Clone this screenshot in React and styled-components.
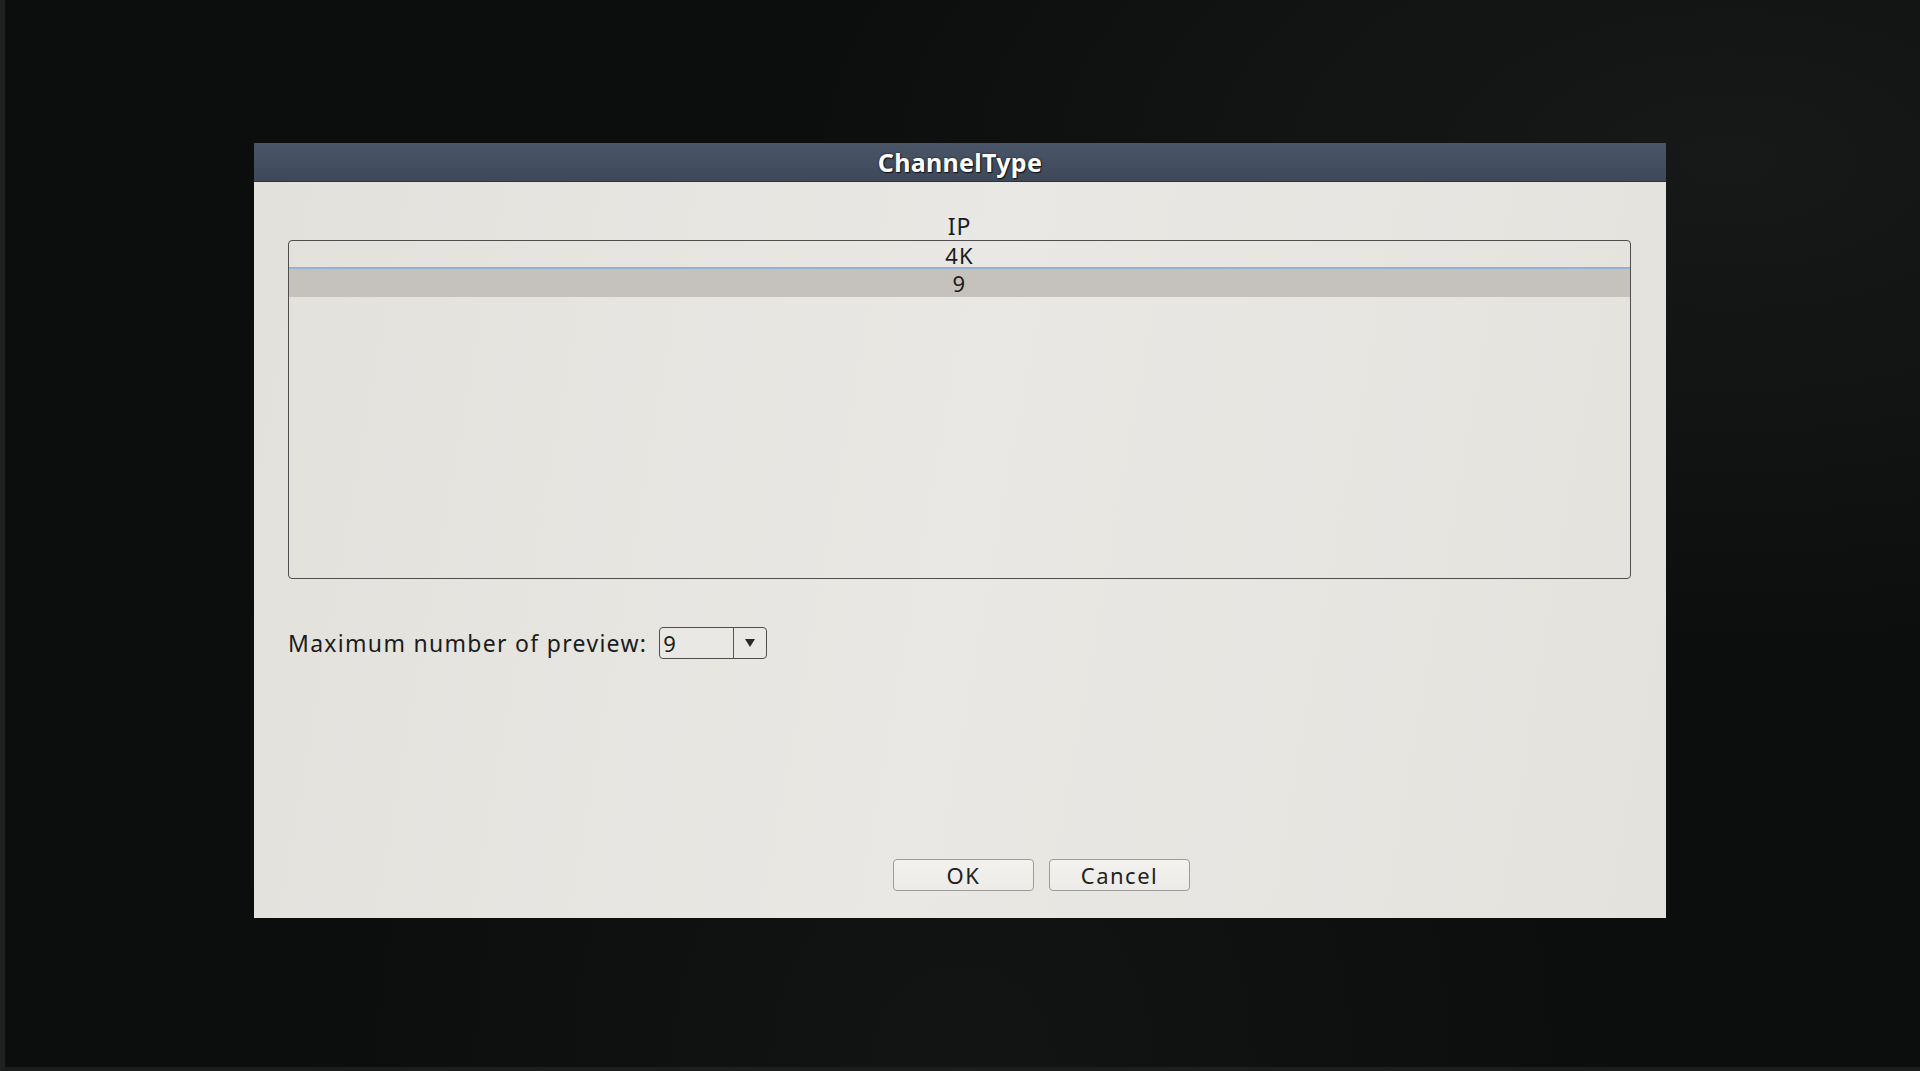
import React from 'react';
import styled, { createGlobalStyle } from 'styled-components';

const GlobalStyle = createGlobalStyle`
  html, body {
    margin: 0;
    padding: 0;
    background: #0c0e0d;
  }
  body {
    font-family: "Noto Sans", "DejaVu Sans", sans-serif;
  }
`;

const Screen = styled.div`
  width: 1920px;
  height: 1071px;
  box-sizing: border-box;
  padding: 143px 0 0 249px;
  border-left: 5px solid #1f2120;
  border-bottom: 4px solid #1c1e1d;
  background:
    radial-gradient(ellipse at 90% 15%, #161917 0%, rgba(14, 16, 15, 0) 40%),
    radial-gradient(ellipse at 50% 100%, #121413 0%, rgba(14, 16, 15, 0) 50%),
    #0c0e0d;
  overflow: hidden;
`;

const Dialog = styled.div`
  width: 1412px;
  height: 775px;
  display: flex;
  flex-direction: column;
  background: linear-gradient(100deg, #e2e1dc 0%, #e9e8e4 50%, #e3e2dd 100%);
`;

const TitleBar = styled.div`
  height: 38px;
  display: flex;
  align-items: center;
  justify-content: center;
  background: linear-gradient(180deg, #4a5668 0%, #3d4859 100%);
  color: #ffffff;
  font-size: 25px;
  font-weight: 700;
  letter-spacing: 0.3px;
  text-shadow: 0 0 2px #101418, 1px 1px 1px #101418;
  border-bottom: 1px solid #2b3340;
`;

const Body = styled.div`
  flex: 1;
  display: flex;
  flex-direction: column;
  padding: 30px 35px 27px 34px;
  color: #1c1c1c;
`;

const ColumnHeader = styled.div`
  height: 28px;
  line-height: 28px;
  text-align: center;
  font-size: 23px;
  letter-spacing: 1px;
`;

const ListBox = styled.div`
  height: 339px;
  box-sizing: border-box;
  border: 1.5px solid #4e4e4e;
  border-radius: 4px;
  display: flex;
  flex-direction: column;
  overflow: hidden;
`;

const Row = styled.div`
  height: ${p => (p.$selected ? '28px' : '26px')};
  line-height: ${p => (p.$selected ? '28px' : '28px')};
  text-align: center;
  font-size: 22px;
  letter-spacing: 1.2px;
  background: ${p => (p.$selected ? '#c5c2be' : 'transparent')};
  border-bottom: ${p => (p.$head ? '2px solid #93b1d2' : 'none')};
`;

const SettingRow = styled.div`
  display: flex;
  align-items: center;
  margin-top: 48px;
  gap: 12px;
`;

const Label = styled.span`
  font-size: 23px;
  letter-spacing: 1.3px;
`;

const Select = styled.div`
  width: 108px;
  height: 32px;
  box-sizing: border-box;
  border: 1.5px solid #4e4e4e;
  border-radius: 4px;
  display: flex;
  background: #e9e8e4;
`;

const SelectValue = styled.span`
  flex: 1;
  font-size: 22px;
  line-height: 30px;
  padding-left: 3px;
`;

const SelectArrow = styled.span`
  width: 32px;
  border-left: 1.5px solid #555;
  display: flex;
  align-items: center;
  justify-content: center;
`;

const Actions = styled.div`
  margin-top: auto;
  display: flex;
  gap: 15px;
  padding-left: 605px;
`;

const Button = styled.button`
  width: 141px;
  height: 32px;
  box-sizing: border-box;
  border: 1px solid #9c9c9a;
  border-radius: 4px;
  background: linear-gradient(180deg, #f3f2ef 0%, #ecebe7 100%);
  color: #222;
  font-family: "Noto Sans", "DejaVu Sans", sans-serif;
  font-size: 22px;
  letter-spacing: 1.5px;
  padding: 0;
  line-height: 30px;
`;

export default function App() {
  return (
    <>
      <GlobalStyle />
      <Screen>
        <Dialog>
          <TitleBar>ChannelType</TitleBar>
          <Body>
            <ColumnHeader>IP</ColumnHeader>
            <ListBox>
              <Row $head>4K</Row>
              <Row $selected>9</Row>
            </ListBox>
            <SettingRow>
              <Label>Maximum number of preview:</Label>
              <Select>
                <SelectValue>9</SelectValue>
                <SelectArrow>
                  <svg width="10" height="8" viewBox="0 0 10 8">
                    <path d="M0 0 H10 L5 8 Z" fill="#2a2a2a" />
                  </svg>
                </SelectArrow>
              </Select>
            </SettingRow>
            <Actions>
              <Button>OK</Button>
              <Button>Cancel</Button>
            </Actions>
          </Body>
        </Dialog>
      </Screen>
    </>
  );
}
